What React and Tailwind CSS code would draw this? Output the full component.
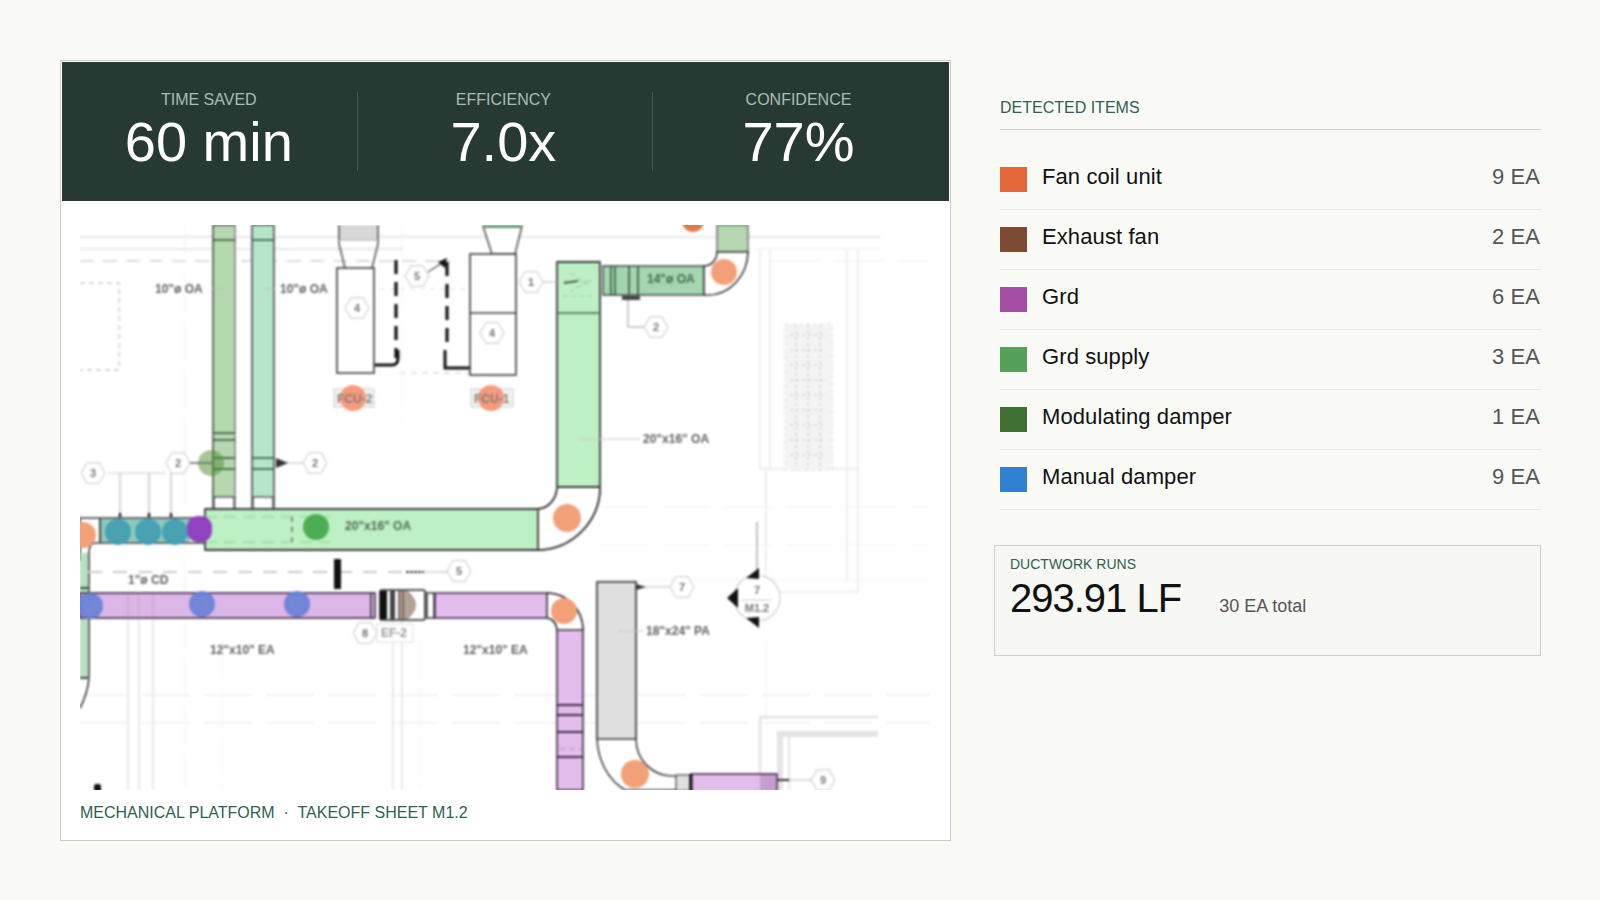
const stats = [
  ["TIME SAVED", "60 min", "pr-[1px]"],
  ["EFFICIENCY", "7.0x", "pr-[3px]"],
  ["CONFIDENCE", "77%", "pr-[5px]"],
];
const items = [
  ["Fan coil unit", "9 EA", "bg-[#e4673c]"],
  ["Exhaust fan", "2 EA", "bg-[#7d4b34]"],
  ["Grd", "6 EA", "bg-[#a54ea5]"],
  ["Grd supply", "3 EA", "bg-[#57a05a]"],
  ["Modulating damper", "1 EA", "bg-[#3f6e33]"],
  ["Manual damper", "9 EA", "bg-[#3081d2]"],
];

function Hex({ x, y, t, r = 12 }) {
  const pts = [0, 60, 120, 180, 240, 300]
    .map((a) => {
      const rad = (a * Math.PI) / 180;
      return `${x + r * Math.cos(rad)},${y + r * Math.sin(rad)}`;
    })
    .join(" ");
  return (
    <g>
      <polygon points={pts} fill="#fff" stroke="#d2d2d2" strokeWidth="1.2" />
      <text x={x} y={y + 4} textAnchor="middle" fontSize="11" fontWeight="700" fill="#777" className="blur-[0.4px]">{t}</text>
    </g>
  );
}

function Label({ x, y, t, size = 12, fill = "#5f5f5f" }) {
  return <text x={x} y={y} fontSize={size} fontWeight="700" fill={fill} className="blur-[0.5px]">{t}</text>;
}

function Circle({ x, y, r = 13, c }) {
  return <circle cx={x} cy={y} r={r} fill={c} />;
}

function Hatched({ x, y, c, line }) {
  return (
    <g>
      <circle cx={x} cy={y} r="13" fill={c} fillOpacity="0.92" />
      <circle cx={x} cy={y} r="6" fill="none" stroke={line} strokeWidth="1" />
      <path d={`M${x - 5} ${y + 4}L${x + 5} ${y - 4}M${x - 2} ${y + 5}L${x + 6} ${y}`} stroke={line} strokeWidth="1" />
    </g>
  );
}

const ORANGE = "#f2a077";
const DK = "#3a3a3a";

function Drawing() {
  return (
    <svg viewBox="80 225 851 565" className="block w-[851px] h-[565px]">
      <g className="blur-[0.8px]">
        {/* faint base plan */}
        <g fill="none" stroke="#ebebeb">
          <path d="M80 237H880" strokeWidth="2.5" />
          <path d="M80 249H403" strokeWidth="2.5" />
          <path d="M755 249H880" strokeWidth="1.5" stroke="#f1f1f1" />
          <path d="M80 261H450" strokeWidth="1.8" strokeDasharray="14 9" stroke="#dcdcdc" />
          <path d="M770 261H930" strokeWidth="1.2" strokeDasharray="50 14" stroke="#f1f1f1" />
          <path d="M340 289H470" strokeWidth="1" strokeDasharray="5 5" stroke="#dcdcdc" />
          <path d="M600 507H930M600 545H930" strokeWidth="1.2" strokeDasharray="48 14" stroke="#f4f4f4" />
          <path d="M80 695H930M80 723H930" strokeWidth="1.4" strokeDasharray="48 14" stroke="#eeeeee" />
          <path d="M600 580H930" strokeWidth="1.2" stroke="#f1f1f1" />
          <path d="M400 373H470" strokeWidth="2" strokeDasharray="6 5" stroke="#e2e2e2" />
          <path d="M185 225V790M222 640V790M402 225V420M420 640V790" strokeWidth="1" strokeDasharray="40 8" stroke="#f3f3f3" />
          <path d="M128 620V790M139 620V790M153 620V790M393 620V790M402 620V790" strokeWidth="2" stroke="#e9e9e9" />
          <path d="M760 250V469M770 250V469M847 250V580M858 250V592M760 469H858M766 469V580M770 592H858" strokeWidth="1.3" stroke="#e6e6e6" />
          <path d="M766 640V720" strokeWidth="1" stroke="#efefef" />
          <path d="M760 790V717H878" strokeWidth="2.5" stroke="#e2e2e2" />
          <path d="M780 790V734H878" strokeWidth="6" stroke="#e4e4e4" />
          <path d="M789 790V734" strokeWidth="1.5" stroke="#dcdcdc" />
        </g>
        <rect x="785" y="324" width="47" height="146" fill="#f4f4f4" stroke="#dedede" strokeDasharray="4 3" />
        <path d="M790 335h36M790 350h36M790 365h36M790 380h36M790 395h36M790 410h36M790 425h36M790 440h36M790 455h36M796 325v145M808 325v145M820 325v145" stroke="#d6d6d6" strokeWidth="1.5" strokeDasharray="3 3" fill="none" />
        <path d="M80 283H119V370H80" fill="none" stroke="#c9c9c9" strokeWidth="1.3" strokeDasharray="5 4" />

        {/* vertical OA ducts */}
        <rect x="213" y="225" width="22" height="282" fill="#b5d8b0" stroke={DK} strokeWidth="1.4" />
        <path d="M235 225V507" stroke="#999" strokeWidth="2" />
        <path d="M213 240H235M213 433H235M213 440H235M213 458H235M213 469H235" stroke="#2f5036" strokeWidth="1.5" fill="none" />
        <rect x="214" y="497" width="20" height="12" fill="#fff" stroke={DK} strokeWidth="1.2" />
        <rect x="252" y="225" width="22" height="282" fill="#b6e6c9" stroke={DK} strokeWidth="1.4" />
        <path d="M252 240H274M252 458H274M252 469H274" stroke="#2f5036" strokeWidth="1.5" fill="none" />
        <rect x="253" y="497" width="20" height="12" fill="#fff" stroke={DK} strokeWidth="1.2" />

        <path d="M212 289H223M264 289H275" stroke="#bbb" />
        <Label x={155} y={293} t={'10"ø OA'} />
        <Label x={280} y={293} t={'10"ø OA'} />

        {/* FCU left */}
        <rect x="339" y="225" width="39" height="15" fill="#d8d8d8" />
        <path d="M339 225V244L345 268M378 225V244L372 268" fill="none" stroke="#555" strokeWidth="1.6" />
        <path d="M339 240H378" stroke="#aaa" strokeWidth="1" />
        <rect x="337" y="268" width="37" height="105" fill="#fff" stroke={DK} strokeWidth="1.6" />
        <Hex x={357} y={308} t="4" />
        <path d="M396 260V358" stroke="#111" strokeWidth="3.2" strokeDasharray="14 8" />
        <path d="M375 365H392Q398 365 398 358V350" stroke="#111" strokeWidth="3" fill="none" />
        <path d="M447 262V345" stroke="#111" strokeWidth="3.2" strokeDasharray="14 8" />
        <path d="M445 350V368H470" stroke="#111" strokeWidth="3" fill="none" />
        <Hex x={417} y={276} t="5" />
        <path d="M428 272L445 261" stroke="#555" strokeWidth="1.2" />
        <path d="M447 258L438 262L445 268Z" fill="#111" />

        {/* FCU right */}
        <path d="M483 226H522L515 254H492Z" fill="#fff" stroke="#555" strokeWidth="1.6" />
        <path d="M483 225H522V228H483Z" fill="#5d9a72" />
        <rect x="470" y="254" width="46" height="121" fill="#fff" stroke={DK} strokeWidth="1.6" />
        <path d="M470 313H516" stroke={DK} strokeWidth="1.6" />
        <Hex x={492} y={333} t="4" />

        {/* FCU tags */}
        <rect x="334" y="389" width="40" height="18" fill="#f2f2f2" stroke="#ccc" />
        <Circle x={353} y={398} c="#f59b7d" />
        <Label x={337} y={403} t="FCU-2" size={12} fill="#8a7a72" />
        <rect x="471" y="389" width="42" height="18" fill="#f2f2f2" stroke="#ccc" />
        <Circle x={491} y={398} c="#f59b7d" />
        <Label x={474} y={403} t="FCU-1" size={12} fill="#8a7a72" />

        {/* big OA duct with elbow */}
        <path d="M557 262H600V487A63 63 0 0 1 538 550H205V509H538A20 22 0 0 0 557 487Z" fill="#bdf0c3" stroke={DK} strokeWidth="1.8" strokeLinejoin="round" />
        <path d="M557 487H600A63 63 0 0 1 538 550V509A20 22 0 0 0 557 487Z" fill="#fff" stroke={DK} strokeWidth="1.8" />
        <path d="M557 313H600" stroke="#3d6a48" strokeWidth="1.6" />
        <path d="M563 281H594M563 296H594M570 273L590 286M570 292L590 280" stroke="#9bd3a8" strokeWidth="1.2" strokeDasharray="5 3" fill="none" />
        <path d="M564 283L578 281" stroke="#333" strokeWidth="1.4" />
        <Circle x={567} y={518} r={14} c={ORANGE} />
        <path d="M580 439H640" stroke="#c6c6c6" />
        <Label x={643} y={443} t={'20"x16" OA'} />
        <path d="M205 517H330M205 542H330" stroke="#9ed8aa" strokeWidth="1.3" strokeDasharray="12 7" />
        <path d="M292 517V542" stroke="#555" strokeWidth="1.2" strokeDasharray="5 5" />
        <Circle x={316} y={527} c="#4cae52" />
        <Label x={345} y={530} t={'20"x16" OA'} fill="#4f6a55" />

        {/* 14 OA duct with elbow */}
        <rect x="603" y="266" width="101" height="29" fill="#a3d6ae" stroke={DK} strokeWidth="1.4" />
        <path d="M611 266V295M615 266V295M629 266V295M638 266V295" stroke="#2f5036" strokeWidth="1.5" fill="none" />
        <rect x="717" y="225" width="31" height="27" fill="#b5d8b0" stroke="#555" strokeWidth="1.2" />
        <path d="M717 252H748A40 44 0 0 1 708 295H704V266A13 14 0 0 0 717 252Z" fill="#fff" stroke={DK} strokeWidth="1.6" />
        <Circle x={724} y={272} c={ORANGE} />
        <Circle x={693} y={221} r={11} c="#df7a48" />
        <Label x={647} y={283} t={'14"ø OA'} fill="#3f6a4c" />
        <Hex x={531} y={282} t="1" />
        <path d="M543 282H557" stroke="#bbb" />
        <path d="M628 296V302M628 302V327H644" stroke="#999" fill="none" />
        <path d="M622 296H640V300H622Z" fill="#444" />
        <Hex x={656} y={327} t="2" />

        {/* left run */}
        <path d="M80 518H205V543H95Q89 543 89 553V560H80Z" fill="#fff" stroke={DK} strokeWidth="1.6" />
        <rect x="100" y="519" width="90" height="23" fill="#8ec8bd" />
        <path d="M100 518V543" stroke={DK} strokeWidth="1.8" />
        <path d="M120 473V515M149 473V515M171 473V515" stroke="#aaa" />
        <path d="M120 513V517M149 513V517M171 513V517" stroke="#222" strokeWidth="2.5" />
        <path d="M108 473H166" stroke="#ccc" />
        <Hatched x={118} y={532} c="#3e9eb3" line="#5f9fa8" />
        <Hatched x={148} y={532} c="#3e9eb3" line="#5f9fa8" />
        <Hatched x={175} y={532} c="#3e9eb3" line="#5f9fa8" />
        <rect x="187" y="516" width="25" height="26" rx="11" fill="#9142c0" />
        <Circle x={83} y={535} c={ORANGE} />
        <Hex x={93} y={473} t="3" />
        <Hex x={178} y={463} t="2" />
        <path d="M190 463H212" stroke="#444" strokeWidth="1.3" />
        <circle cx="211" cy="463" r="13" fill="#4f8a30" fillOpacity="0.5" />
        <Hex x={315} y={463} t="2" />
        <path d="M276 463H303" stroke="#bbb" />
        <path d="M276 458L288 463L276 468Z" fill="#333" />

        <rect x="80" y="553" width="9" height="125" fill="#b6e0c0" />
        <path d="M89 553V678" stroke="#666" strokeWidth="2" />
        <path d="M80 588H89" stroke="#2f5036" strokeWidth="2" />
        <path d="M80 678H89" stroke="#2f5036" strokeWidth="2" />
        <path d="M89 679Q87 695 80 708" stroke="#333" strokeWidth="1.6" fill="none" />

        {/* dashed mid line */}
        <path d="M88 572H410" stroke="#ccc" strokeWidth="2.2" strokeDasharray="14 11" />
        <path d="M406 572H424" stroke="#444" strokeWidth="2" strokeDasharray="3 1" />
        <path d="M424 572H447" stroke="#bbb" />
        <Hex x={459} y={571} t="5" />
        <rect x="334" y="559" width="7" height="30" fill="#111" />
        <Label x={128} y={584} t={'1"ø CD'} />

        {/* purple exhaust */}
        <rect x="80" y="593" width="295" height="25" fill="#dcb6e6" stroke="#3f2a47" strokeWidth="1.6" />
        <path d="M128 594V617M139 594V617M153 594V617" stroke="#bfa0c8" />
        <path d="M371 593V618" stroke="#3f2a47" strokeWidth="1.6" />
        <Hatched x={90} y={606} c="#6680d8" line="#7a8fd0" />
        <Hatched x={202} y={604} c="#6680d8" line="#7a8fd0" />
        <Hatched x={297} y={604} c="#6680d8" line="#7a8fd0" />
        <rect x="380" y="590" width="45" height="30" rx="2" fill="#fff" stroke="#222" strokeWidth="1.6" />
        <rect x="380" y="591" width="7" height="28" fill="#111" />
        <rect x="390" y="591" width="5" height="28" fill="#444" />
        <path d="M398 591H408Q416 598 416 605Q416 612 408 619H398Z" fill="#b4a097" />
        <path d="M399 591V619M403 591V619" stroke="#6a5148" strokeWidth="1.4" />
        <rect x="427" y="593" width="7" height="25" fill="#fff" stroke="#222" strokeWidth="1.4" />
        <path d="M435 593H547A36 37 0 0 1 583 630V790H557V630A11 12 0 0 0 547 618H435Z" fill="#e3bdec" stroke="#3f2a47" strokeWidth="1.6" />
        <path d="M547 593A36 37 0 0 1 583 630H557A11 12 0 0 0 547 618Z" fill="#fff" stroke="#333" strokeWidth="1.6" />
        <Circle x={564} y={611} c={ORANGE} />
        <path d="M557 705H583M557 715H583M557 732H583M557 757H583" stroke="#3f2a47" strokeWidth="2" fill="none" />
        <path d="M560 749H582" stroke="#b489c0" strokeDasharray="6 3" />
        <Hex x={365} y={633} t="8" />
        <rect x="377" y="624" width="36" height="18" fill="#fff" stroke="#ddd" />
        <Label x={381} y={637} t="EF-2" fill="#999" />
        <Label x={210} y={654} t={'12"x10" EA'} />
        <Label x={463} y={654} t={'12"x10" EA'} />

        {/* grey duct */}
        <path d="M597 582H636V739A36 37 0 0 0 672 776H690V790H625A50 60 0 0 1 597 739Z" fill="#fff" stroke="#444" strokeWidth="1.6" />
        <rect x="597" y="582" width="39" height="157" fill="#dfdfdf" stroke="#444" strokeWidth="1.6" />
        <Circle x={635} y={774} r={14} c={ORANGE} />
        <rect x="676" y="775" width="14" height="16" fill="#dfdfdf" stroke="#444" strokeWidth="1.2" />
        <path d="M636 587H672" stroke="#bbb" />
        <path d="M636 584L646 587L636 590Z" fill="#333" />
        <Hex x={682} y={587} t="7" />
        <path d="M618 631H643" stroke="#c6c6c6" />
        <Label x={646} y={635} t={'18"x24" PA'} />
        <rect x="691" y="774" width="86" height="20" fill="#e3bdec" stroke="#3f2a47" strokeWidth="1.6" />
        <path d="M691 774V794" stroke="#111" strokeWidth="3" />
        <rect x="760" y="775" width="17" height="16" fill="#9a6fa8" fillOpacity="0.4" />
        <path d="M777 780H789" stroke="#333" strokeWidth="2" />
        <path d="M789 780H811" stroke="#bbb" />
        <Hex x={823} y={780} t="9" />

        {/* section marker */}
        <path d="M757 522V570" stroke="#999" strokeWidth="1.2" />
        <circle cx="757" cy="598" r="23" fill="#fff" stroke="#ccc" strokeWidth="1.2" />
        <path d="M741 600H773" stroke="#ccc" />
        <path d="M727 598L738 588V608Z" fill="#111" />
        <path d="M759 568L746 578L759 579Z" fill="#111" />
        <path d="M759 628L746 618L759 617Z" fill="#111" />
        <text x="757" y="594" textAnchor="middle" fontSize="11" fontWeight="700" fill="#777">7</text>
        <text x="757" y="612" textAnchor="middle" fontSize="11" fontWeight="700" fill="#777">M1.2</text>

        <rect x="94" y="784" width="7" height="8" rx="2" fill="#111" />
      </g>
    </svg>
  );
}

export default function App() {
  return (
    <div className="min-h-[900px] bg-[#f9faf6] font-['Liberation_Sans',Arial,sans-serif] flex items-start gap-[43px] pl-[60px] pr-[59px] pt-[60px]">
      <div className="w-[891px] h-[781px] shrink-0 bg-white border border-[#cdcdc6] p-px">
        <div className="h-[139px] bg-[#263a33] flex pt-[30px]">
          {stats.map(([label, value, pad], i) => (
            <div
              key={label}
              className={`w-[295.6px] h-[79px] flex flex-col items-center ${pad} ${i < 2 ? "border-r border-[#46584f]" : ""}`}
            >
              <div className="text-[16px] leading-[16px] text-[#a9bdb3]">{label}</div>
              <div className="text-[56px] leading-[58px] text-white mt-[5px]">{value}</div>
            </div>
          ))}
        </div>
        <div className="pl-[18px] pt-[24px]">
          <Drawing />
          <div className="mt-[13px] text-[16px] leading-[20px] text-[#2f5f50]">
            MECHANICAL PLATFORM&nbsp; ·&nbsp; TAKEOFF SHEET M1.2
          </div>
        </div>
      </div>

      <div className="w-[547px] shrink-0">
        <div className="ml-[6px] pt-[38px]">
          <div className="h-[31px] text-[16px] leading-[20px] text-[#2f5f50]">DETECTED ITEMS</div>
          <div className="border-t border-[#d3d3cc] mb-[20px]" />
          {items.map(([name, qty, color]) => (
            <div key={name} className="h-[60px] flex items-start border-b border-[#e6e6e0]">
              <div className={`w-[27px] h-[25px] mt-[17px] ${color}`} />
              <div className="ml-[15px] mt-[15px] text-[22px] leading-[24px] tracking-[0.1px] text-[#111]">{name}</div>
              <div className="ml-auto mr-px mt-[15px] text-[22px] leading-[24px] tracking-[0.1px] text-[#555]">{qty}</div>
            </div>
          ))}
        </div>
        <div className="mt-[35px] h-[111px] border border-[#cfcfc8] bg-[#f7f7f4] pl-[15px] pt-[10px]">
          <div className="text-[14px] leading-[16px] text-[#2f5f50]">DUCTWORK RUNS</div>
          <div className="flex items-baseline mt-[4px]">
            <span className="text-[40px] leading-[44px] text-[#111] tracking-[-1px]">293.91 LF</span>
            <span className="ml-[38px] text-[18px] leading-[20px] text-[#555]">30 EA total</span>
          </div>
        </div>
      </div>
    </div>
  );
}
